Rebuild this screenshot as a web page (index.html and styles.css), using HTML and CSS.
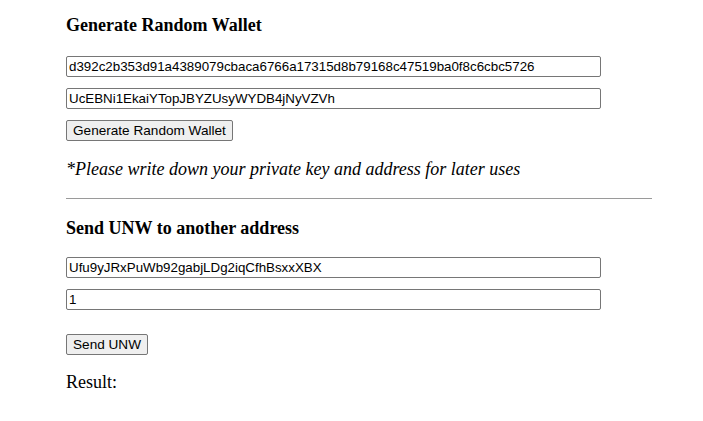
FILE: index.html
```html
<!DOCTYPE html>
<html>
<head>
<meta charset="utf-8">
<link rel="stylesheet" href="styles.css">
</head>
<body>
<div class="container">
  <section class="section">
    <h3 class="title first">Generate Random Wallet</h3>
    <input class="field" type="text" value="d392c2b353d91a4389079cbaca6766a17315d8b79168c47519ba0f8c6cbc5726">
    <input class="field" type="text" value="UcEBNi1EkaiYTopJBYZUsyWYDB4jNyVZVh">
    <button class="btn">Generate Random Wallet</button>
    <p class="note">*Please write down your private key and address for later uses</p>
  </section>
  <hr class="divider">
  <section class="section">
    <h3 class="title second">Send UNW to another address</h3>
    <input class="field" type="text" value="Ufu9yJRxPuWb92gabjLDg2iqCfhBsxxXBX">
    <input class="field" type="text" value="1">
    <button class="btn send">Send UNW</button>
    <p class="result">Result:</p>
  </section>
</div>
</body>
</html>
```
FILE: styles.css
```css
html, body {
  margin: 0;
  padding: 0;
  background: #fff;
}
body {
  font-family: "Liberation Serif", serif;
  color: #000;
}
.container {
  width: 586px;
  padding: 0 0 0 66px;
}
.title {
  font-size: 18px;
  font-weight: bold;
  margin: 18.6px 0 20px;
}
.title.first {
  margin-top: 15px;
}
.title.second {
  margin-bottom: 18.5px;
}
.field {
  display: block;
  box-sizing: border-box;
  width: 535px;
  height: 21px;
  margin: 0 0 11px;
  padding: 1px 2px;
  border: 1px solid #767676;
  border-radius: 2px;
  font-family: "Liberation Sans", Arial, sans-serif;
  font-size: 13.33px;
  color: #000;
}
.btn {
  display: block;
  box-sizing: border-box;
  height: 21px;
  padding: 1px 6px;
  border: 1px solid #767676;
  border-radius: 2px;
  background: #efefef;
  font-family: "Liberation Sans", Arial, sans-serif;
  font-size: 13.6px;
  color: #000;
}
.send {
  margin-top: 24px;
}
.note {
  font-style: italic;
  font-size: 18px;
  margin: 18px 0 0;
}
.divider {
  margin: 18px 0 0;
  border: 0;
  border-top: 1px solid #9a9a9a;
  height: 0;
}
.result {
  font-size: 18px;
  margin: 17px 0 0;
}
```
